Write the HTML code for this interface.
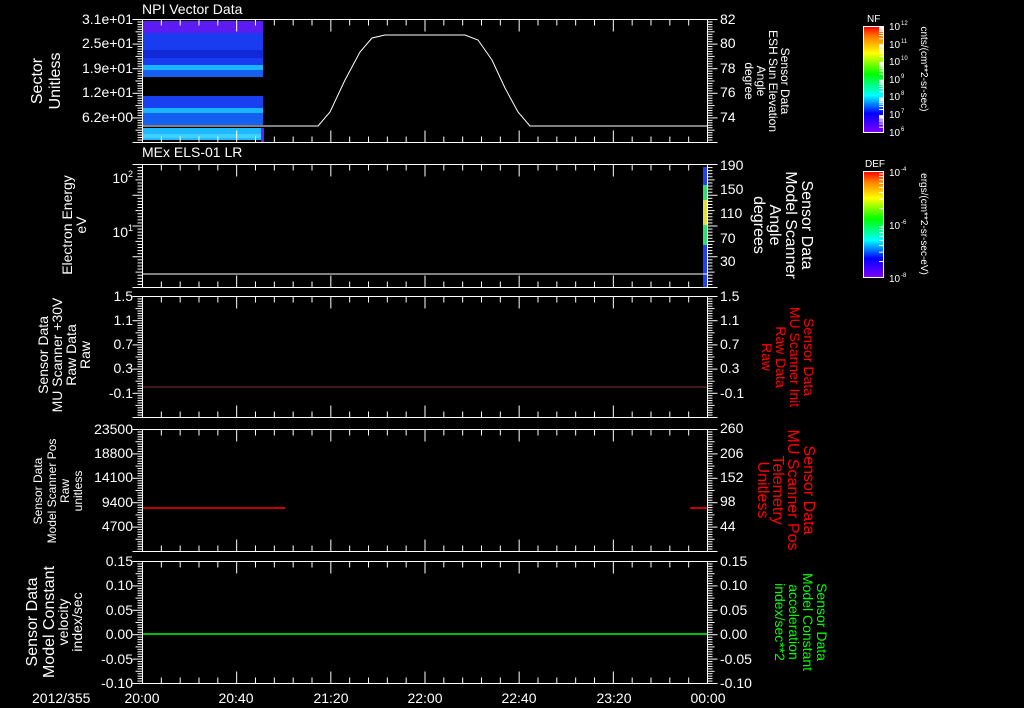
<!DOCTYPE html><html><head><meta charset="utf-8"><style>
html,body{margin:0;padding:0;background:#000;width:1024px;height:708px;overflow:hidden}
svg{display:block}
text{font-family:"Liberation Sans",sans-serif;fill:#fff;font-size:14px}
text.s{font-size:9px}
text.cb{font-size:10px}
text.cs{font-size:6px}
text.u{font-size:10px}
</style></head><body>
<svg id="g" width="1024" height="708" viewBox="0 0 1024 708">
<defs>
<linearGradient id="rb" x1="0" y1="1" x2="0" y2="0">
<stop offset="0" stop-color="#8000ff"/><stop offset="0.18" stop-color="#0000ff"/><stop offset="0.35" stop-color="#00ffff"/><stop offset="0.55" stop-color="#00ff00"/><stop offset="0.75" stop-color="#ffff00"/><stop offset="0.9" stop-color="#ff8000"/><stop offset="1" stop-color="#ff0000"/>
</linearGradient>
</defs>
<rect x="142" y="21" width="121" height="12" fill="#5a1cf0"/>
<rect x="142" y="33" width="121" height="32" fill="#1a3cf0"/>
<rect x="142" y="50" width="121" height="8" fill="#1028d8"/>
<rect x="142" y="65" width="121" height="5" fill="#1ab4ff"/>
<rect x="142" y="70" width="121" height="7" fill="#1560f0"/>
<rect x="142" y="96" width="121" height="12" fill="#1840f0"/>
<rect x="142" y="108" width="121" height="5" fill="#1ab4ff"/>
<rect x="142" y="113" width="121" height="12" fill="#1460f0"/>
<rect x="142" y="128" width="121" height="12" fill="#20b8ff"/>
<rect x="142" y="134" width="121" height="4" fill="#40d0ff"/>
<rect x="261" y="128" width="3" height="14" fill="#6020ff"/>
<polyline fill="none" stroke="#fff" stroke-width="1" points="142,126 318,126 330,112 345,80 360,52 372,38 385,35 465,35 478,40 492,60 505,88 518,112 530,126 707,126"/>
<rect x="703" y="167" width="4" height="120" fill="#2040ff"/>
<rect x="703" y="185" width="4" height="60" fill="#30e070"/>
<rect x="703" y="200" width="4" height="25" fill="#e0e040"/>
<line x1="142" y1="274" x2="707" y2="274" stroke="#fff"/>
<line x1="142" y1="387" x2="707" y2="387" stroke="#803030"/>
<line x1="142" y1="508" x2="285" y2="508" stroke="#f00" stroke-width="1.5"/>
<line x1="690" y1="508" x2="707" y2="508" stroke="#f00" stroke-width="1.5"/>
<line x1="142" y1="634" x2="707" y2="634" stroke="#0f0" stroke-width="1.5"/>
<g id="frames" stroke="#fff" fill="none"></g>
<text x="142" y="14">NPI Vector Data</text>
<text x="142" y="157">MEx ELS-01 LR</text>
<g text-anchor="end">
<text x="133" y="24">3.1e+01</text><text x="133" y="48">2.5e+01</text><text x="133" y="73">1.9e+01</text><text x="133" y="97">1.2e+01</text><text x="133" y="122">6.2e+00</text>
<text x="128" y="183">10</text><text x="128" y="237">10</text>
<text x="133" y="301">1.5</text><text x="133" y="325">1.1</text><text x="133" y="349">0.7</text><text x="133" y="373">0.3</text><text x="133" y="398">-0.1</text>
<text x="133" y="434">23500</text><text x="133" y="458">18800</text><text x="133" y="482">14100</text><text x="133" y="507">9400</text><text x="133" y="531">4700</text>
<text x="133" y="566">0.15</text><text x="133" y="590">0.10</text><text x="133" y="615">0.05</text><text x="133" y="639">0.00</text><text x="133" y="664">-0.05</text><text x="133" y="688">-0.10</text>
</g>
<text x="128" y="177" class="s">2</text><text x="128" y="231" class="s">1</text>
<g>
<text x="720" y="24">82</text><text x="720" y="48">80</text><text x="720" y="73">78</text><text x="720" y="97">76</text><text x="720" y="122">74</text>
<text x="720" y="170">190</text><text x="720" y="194">150</text><text x="720" y="218">110</text><text x="720" y="243">70</text><text x="720" y="266">30</text>
<text x="720" y="301">1.5</text><text x="720" y="325">1.1</text><text x="720" y="349">0.7</text><text x="720" y="373">0.3</text><text x="720" y="398">-0.1</text>
<text x="720" y="433">260</text><text x="720" y="458">206</text><text x="720" y="482">152</text><text x="720" y="506">98</text><text x="720" y="531">44</text>
<text x="720" y="566">0.15</text><text x="720" y="590">0.10</text><text x="720" y="615">0.05</text><text x="720" y="639">0.00</text><text x="720" y="664">-0.05</text><text x="720" y="688">-0.10</text>
</g>
<text x="32" y="703">2012/355</text>
<g text-anchor="middle">
<text x="142" y="703">20:00</text><text x="236" y="703">20:40</text><text x="331" y="703">21:20</text><text x="425" y="703">22:00</text><text x="519" y="703">22:40</text><text x="614" y="703">23:20</text><text x="708" y="703">00:00</text>
</g>
<g text-anchor="middle">
<text transform="translate(42,81) rotate(-90)" style="font-size:16px">Sector</text>
<text transform="translate(60,81) rotate(-90)" style="font-size:16px">Unitless</text>
<text transform="translate(72,225) rotate(-90)">Electron Energy</text>
<text transform="translate(86,225) rotate(-90)">eV</text>
<text transform="translate(48,355) rotate(-90)">Sensor Data</text>
<text transform="translate(62,355) rotate(-90)">MU Scanner +30V</text>
<text transform="translate(76,355) rotate(-90)">Raw Data</text>
<text transform="translate(90,355) rotate(-90)">Raw</text>
<text transform="translate(42,491) rotate(-90)" style="font-size:12px">Sensor Data</text>
<text transform="translate(56,491) rotate(-90)" style="font-size:12px">Model Scanner Pos</text>
<text transform="translate(69,491) rotate(-90)" style="font-size:12px">Raw</text>
<text transform="translate(82,491) rotate(-90)" style="font-size:12px">unitless</text>
<text transform="translate(37,622) rotate(-90)" style="font-size:16px">Sensor Data</text>
<text transform="translate(54,622) rotate(-90)" style="font-size:16px">Model Constant</text>
<text transform="translate(68,622) rotate(-90)">velocity</text>
<text transform="translate(82,622) rotate(-90)">index/sec</text>
</g>
<g text-anchor="middle">
<text transform="translate(781,81) rotate(90)" style="font-size:12px">Sensor Data</text>
<text transform="translate(769,81) rotate(90)" style="font-size:12px">ESH Sun Elevation</text>
<text transform="translate(757,81) rotate(90)" style="font-size:12px">Angle</text>
<text transform="translate(745,81) rotate(90)" style="font-size:12px">degree</text>
<text transform="translate(802,225) rotate(90)" style="font-size:16px">Sensor Data</text>
<text transform="translate(786,225) rotate(90)" style="font-size:16px">Model Scanner</text>
<text transform="translate(770,225) rotate(90)" style="font-size:16px">Angle</text>
<text transform="translate(754,225) rotate(90)" style="font-size:16px">degrees</text>
</g>
<g text-anchor="middle">
<text transform="translate(804,357) rotate(90)" style="fill:#f00">Sensor Data</text>
<text transform="translate(790,357) rotate(90)" style="fill:#f00">MU Scanner Init</text>
<text transform="translate(776,357) rotate(90)" style="fill:#f00">Raw Data</text>
<text transform="translate(762,357) rotate(90)" style="fill:#f00">Raw</text>
<text transform="translate(804,490) rotate(90)" style="fill:#f00;font-size:16px">Sensor Data</text>
<text transform="translate(788,490) rotate(90)" style="fill:#f00;font-size:16px">MU Scanner Pos</text>
<text transform="translate(773,490) rotate(90)" style="fill:#f00;font-size:16px">Telemetry</text>
<text transform="translate(758,490) rotate(90)" style="fill:#f00;font-size:16px">Unitless</text>
<text transform="translate(817,622) rotate(90)" style="fill:#0f0">Sensor Data</text>
<text transform="translate(803,622) rotate(90)" style="fill:#0f0">Model Constant</text>
<text transform="translate(789,622) rotate(90)" style="fill:#0f0">acceleration</text>
<text transform="translate(775,622) rotate(90)" style="fill:#0f0">index/sec**2</text>
</g>
<rect x="863.5" y="26.5" width="20" height="106" fill="url(#rb)" stroke="#fff"/>
<rect x="863.5" y="171.5" width="20" height="106" fill="url(#rb)" stroke="#fff"/>
<g id="cbt" stroke="#fff"></g>
<text x="867" y="22" class="cb">NF</text>
<text x="865" y="167" class="cb">DEF</text>
<text x="889" y="30" class="cb">10</text><text x="889" y="48" class="cb">10</text><text x="889" y="65" class="cb">10</text><text x="889" y="83" class="cb">10</text><text x="889" y="100" class="cb">10</text><text x="889" y="118" class="cb">10</text><text x="889" y="136" class="cb">10</text>
<text x="889" y="176" class="cb">10</text><text x="889" y="229" class="cb">10</text><text x="889" y="282" class="cb">10</text>
<text x="901" y="25" class="cs">12</text><text x="901" y="43" class="cs">11</text><text x="901" y="60" class="cs">10</text><text x="901" y="78" class="cs">9</text><text x="901" y="95" class="cs">8</text><text x="901" y="113" class="cs">7</text><text x="901" y="131" class="cs">6</text>
<text x="901" y="171" class="cs">-4</text><text x="901" y="224" class="cs">-6</text><text x="901" y="277" class="cs">-8</text>
<g text-anchor="middle">
<text transform="translate(921,69) rotate(90)" class="u">cnts/(cm**2-sr-sec)</text>
<text transform="translate(921,224) rotate(90)" class="u">ergs/(cm**2-sr-sec-eV)</text>
</g>
</svg>
<script>
var ns="http://www.w3.org/2000/svg",F=document.getElementById('frames');
function L(x1,y1,x2,y2){var l=document.createElementNS(ns,'line');l.setAttribute('x1',x1);l.setAttribute('y1',y1);l.setAttribute('x2',x2);l.setAttribute('y2',y2);F.appendChild(l);}
var P=[[19.5,142.5,5],[164.5,287.5,4],[296.5,417.5,5],[429.5,551.5,5],[561.5,683.5,5]];
var X0=142.5,X1=707.5;
P.forEach(function(p){var t=p[0],b=p[1];
L(X0,t,X1,t);L(X0,b,X1,b);L(X0,t,X0,b);L(X1,t,X1,b);
for(var i=0;i<=30;i++){var x=X0+(X1-X0)*i/30;var len=(i%5==0)?12:6;L(x,t,x,t+len);L(x,b,x,b-len);}
var h=b-t,n=p[2];
for(var k=0;k<=n*10;k++){var y=t+h*k/(n*10);if(y>b)break;var len=(k%5==0)?(k%10==0?10:7):5;L(X0-len,y,X0,y);L(X1,y,X1+len,y);}
});
var C=document.getElementById('cbt');
function M(x1,y1,x2,y2){var l=document.createElementNS(ns,'line');l.setAttribute('x1',x1);l.setAttribute('y1',y1);l.setAttribute('x2',x2);l.setAttribute('y2',y2);C.appendChild(l);}
for(var d=0;d<6;d++){for(var k=2;k<10;k++){var y=132.5-17.7*(d+Math.log10(k));M(879,y,883,y);}}
for(var d=0;d<2;d++){for(var k=2;k<10;k++){var y=277.5-53*(d+Math.log10(k));M(879,y,883,y);}}
</script>
</body></html>
